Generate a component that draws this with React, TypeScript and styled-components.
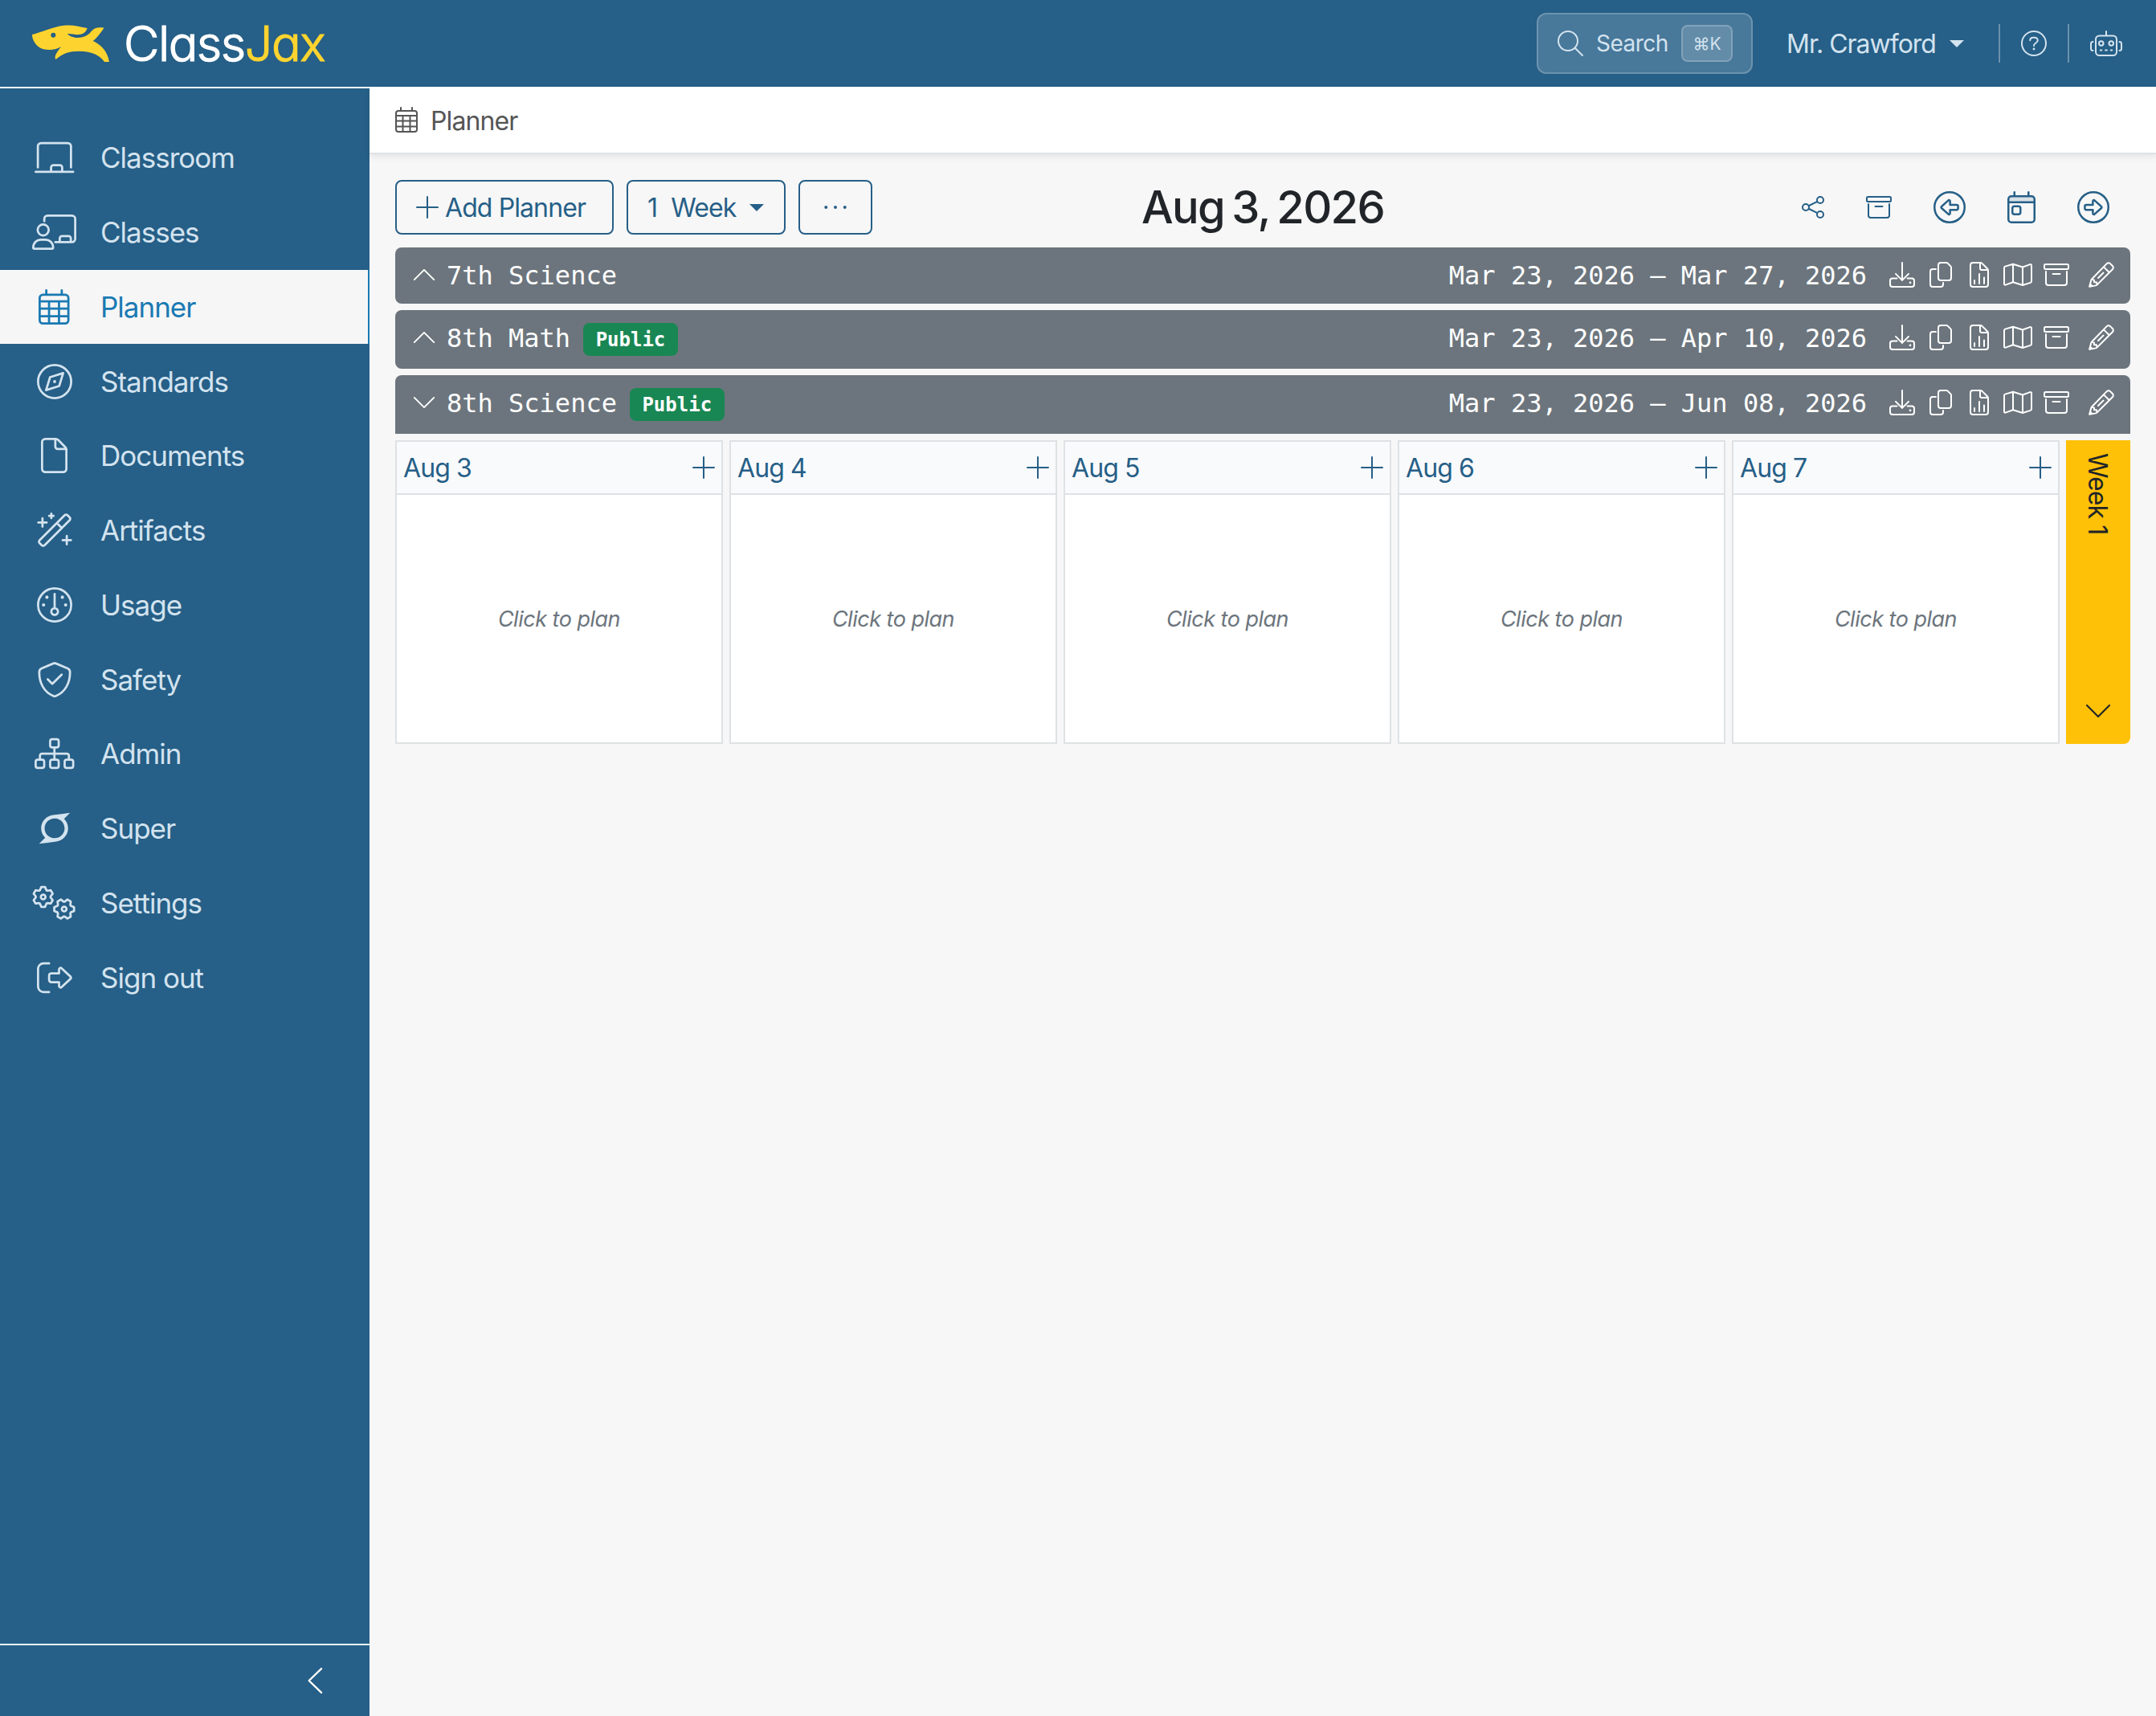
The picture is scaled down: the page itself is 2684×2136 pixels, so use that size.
import React, {FC} from "react";
import styled, {createGlobalStyle, ThemeProvider} from "styled-components";
import {FaSuperpowers} from "react-icons/fa";

const theme = {
    colors: {
        primary: '#265f87',
        active: '#1a7ab3',
        light: '#d3e3ef',
        dark: '#212529',
        grey: '#6c757d',
        border: '#dee2e4',
        page: '#f7f7f7',
        success: '#198754',
        warning: '#ffc107',
    },
    fonts: {
        sans: 'Inter, "Liberation Sans", sans-serif',
        mono: '"DejaVu Sans Mono", "Liberation Mono", monospace',
    },
};

const GlobalStyle = createGlobalStyle`
  * {
    box-sizing: border-box;
  }

  body {
    margin: 0;
    background: #f7f7f7;
    font-family: Inter, "Liberation Sans", sans-serif;
    font-weight: 430;
  }
`;

/* ---------- icons ---------- */

const gear = (cx: number, cy: number, turn: number) => {
    const points: string[] = [];
    for (let i = 0; i < 6; i++) {
        [[-26, 108], [-11, 146], [11, 146], [26, 108]].forEach(([offset, radius]) => {
            const angle = (turn + i * 60 + offset) * Math.PI / 180;
            points.push(`${(cx + radius * Math.cos(angle)).toFixed(1)} ${(cy + radius * Math.sin(angle)).toFixed(1)}`);
        });
    }
    return `M${points.join('L')}z`;
};

const circle = (cx: number, cy: number, r: number) =>
    `M${cx - r} ${cy}a${r} ${r} 0 1 0 ${r * 2} 0a${r} ${r} 0 1 0 ${-r * 2} 0z`;

const filePath = 'M16 64a48 48 0 0 1 48-48h150a48 48 0 0 1 34 14l106 106a48 48 0 0 1 14 34v278a48 48 0 0 1-48 48H64a48 48 0 0 1-48-48zM208 16v112a32 32 0 0 0 32 32h125';
const arrowPath = 'M144 216h104v-56c0-16 18-24 30-12l106 96a16 16 0 0 1 0 24L278 364c-12 12-30 4-30-12v-56H144a24 24 0 0 1-24-24v-32a24 24 0 0 1 24-24z';
const arrowLeftPath = 'M368 216H264v-56c0-16-18-24-30-12l-106 96a16 16 0 0 0 0 24l106 96c12 12 30 4 30-12v-56h104a24 24 0 0 0 24-24v-32a24 24 0 0 0-24-24z';

interface IconShape {
    width: number;
    line: string;
    fill?: string;
    tint?: string;
}

const shapes: Record<string, IconShape> = {
    chalkboard: {
        width: 576,
        line: 'M48 400V96a48 48 0 0 1 48-48h384a48 48 0 0 1 48 48v304M16 464h544M240 464v-64a32 32 0 0 1 32-32h96a32 32 0 0 1 32 32v64',
    },
    teacher: {
        width: 640,
        line: `M176 96V64a48 48 0 0 1 48-48h352a48 48 0 0 1 48 48v288a48 48 0 0 1-48 48H336M400 400v-56a32 32 0 0 1 32-32h96a32 32 0 0 1 32 32v56${circle(160, 224, 80)}M16 480c0-71 50-116 116-116h56c66 0 116 45 116 116a16 16 0 0 1-16 16H32a16 16 0 0 1-16-16z`,
    },
    calendar: {
        width: 448,
        line: 'M64 80h320a48 48 0 0 1 48 48v320a48 48 0 0 1-48 48H64a48 48 0 0 1-48-48V128a48 48 0 0 1 48-48zM112 16v64M336 16v64M16 176h416M16 280h416M16 392h416M152 176v320M296 176v320',
    },
    compass: {
        width: 512,
        line: `${circle(256, 256, 240)}M380 132L190 192L132 380L322 320z`,
        fill: circle(256, 256, 22),
    },
    file: {width: 384, line: filePath},
    wand: {
        width: 512,
        line: 'M38 402L402 38a28 28 0 0 1 40 0l32 32a28 28 0 0 1 0 40L110 474a28 28 0 0 1-40 0l-32-32a28 28 0 0 1 0-40zM288 152l72 72M80 84v120M20 144h120M208 16v64M176 48h64M432 340v120M372 400h120',
    },
    gauge: {
        width: 512,
        line: `${circle(256, 256, 240)}${circle(256, 352, 48)}M256 96v208`,
        fill: `${circle(144, 144, 24)}${circle(368, 144, 24)}${circle(96, 256, 24)}${circle(416, 256, 24)}`,
    },
    shield: {
        width: 512,
        line: 'M236 22a48 48 0 0 1 40 0L444 92c22 9 35 32 35 56 0 160-72 290-203 344a48 48 0 0 1-40 0C105 438 33 308 33 148c0-24 13-47 35-56zM156 250l66 66 136-132',
    },
    sitemap: {
        width: 576,
        line: 'M256 48h64a30 30 0 0 1 30 30v60a30 30 0 0 1-30 30h-64a30 30 0 0 1-30-30V78a30 30 0 0 1 30-30zM46 344h64a30 30 0 0 1 30 30v60a30 30 0 0 1-30 30H46a30 30 0 0 1-30-30v-60a30 30 0 0 1 30-30zM256 344h64a30 30 0 0 1 30 30v60a30 30 0 0 1-30 30h-64a30 30 0 0 1-30-30v-60a30 30 0 0 1 30-30zM466 344h64a30 30 0 0 1 30 30v60a30 30 0 0 1-30 30h-64a30 30 0 0 1-30-30v-60a30 30 0 0 1 30-30zM288 168v176M78 344v-56a32 32 0 0 1 32-32h356a32 32 0 0 1 32 32v56',
    },
    gears: {
        width: 640,
        line: `${gear(160, 168, 90)}${circle(160, 168, 34)}${gear(464, 344, 0)}${circle(464, 344, 34)}`,
    },
    signOut: {
        width: 512,
        line: 'M176 48H96a80 80 0 0 0-80 80v256a80 80 0 0 0 80 80h80M208 192h112v-56c0-20 22-30 36-16l130 120a24 24 0 0 1 0 32L356 392c-14 14-36 4-36-16v-56H208a32 32 0 0 1-32-32v-64a32 32 0 0 1 32-32z',
    },
    search: {width: 512, line: `${circle(208, 208, 192)}M344 344L496 496`},
    question: {
        width: 512,
        line: `${circle(256, 256, 240)}M180 196c0-34 26-58 60-58h32c34 0 60 26 60 58 0 54-76 56-76 100v6`,
        fill: circle(256, 368, 23),
    },
    robot: {
        width: 640,
        line: `M320 16v88M184 104h272a72 72 0 0 1 72 72v248a72 72 0 0 1-72 72H184a72 72 0 0 1-72-72V176a72 72 0 0 1 72-72z${circle(220, 256, 44)}${circle(420, 256, 44)}M204 392h24M306 392h28M412 392h24M56 224a40 40 0 0 0-40 40v96a40 40 0 0 0 40 40M584 224a40 40 0 0 1 40 40v96a40 40 0 0 1-40 40`,
    },
    share: {
        width: 448,
        line: `${circle(80, 256, 64)}${circle(368, 112, 64)}${circle(368, 400, 64)}M138 228l172-87M138 284l172 87`,
    },
    archive: {
        width: 512,
        line: 'M40 48h432a24 24 0 0 1 24 24v48a24 24 0 0 1-24 24H40a24 24 0 0 1-24-24V72a24 24 0 0 1 24-24zM48 192v224a48 48 0 0 0 48 48h320a48 48 0 0 0 48-48V192M184 240h144',
    },
    circleLeft: {width: 512, line: `${circle(256, 256, 240)}${arrowLeftPath}`},
    circleRight: {width: 512, line: `${circle(256, 256, 240)}${arrowPath}`},
    calendarDay: {
        width: 448,
        line: 'M64 80h320a48 48 0 0 1 48 48v320a48 48 0 0 1-48 48H64a48 48 0 0 1-48-48V128a48 48 0 0 1 48-48zM112 16v64M336 16v64M16 176h416M112 240h64a32 32 0 0 1 32 32v64a32 32 0 0 1-32 32h-64a32 32 0 0 1-32-32v-64a32 32 0 0 1 32-32z',
        tint: 'M64 80h320a48 48 0 0 1 48 48v48H16v-48a48 48 0 0 1 48-48z',
    },
    download: {
        width: 512,
        line: 'M256 16v350M128 238l128 128 128-128M152 328H64a48 48 0 0 0-48 48v72a48 48 0 0 0 48 48h384a48 48 0 0 0 48-48v-72a48 48 0 0 0-48-48h-88',
        fill: circle(416, 412, 22),
    },
    copy: {
        width: 448,
        line: 'M224 16h116a32 32 0 0 1 22 10l60 60a32 32 0 0 1 10 22v212a48 48 0 0 1-48 48H224a48 48 0 0 1-48-48V64a48 48 0 0 1 48-48zM128 144H64a48 48 0 0 0-48 48v256a48 48 0 0 0 48 48h160a48 48 0 0 0 48-48v-32',
    },
    fileChart: {width: 384, line: `${filePath}M96 368v64M192 240v192M288 312v120`},
    map: {
        width: 576,
        line: 'M16 120a32 32 0 0 1 20-30L192 44l192 60 148-54c14-5 28 5 28 20v314a32 32 0 0 1-20 30L384 464l-192-60L44 458c-14 5-28-5-28-20zM192 44v360M384 104v360',
    },
    pencil: {
        width: 512,
        line: 'M364 34a48 48 0 0 1 68 0l46 46a48 48 0 0 1 0 68L172 454a64 64 0 0 1-28 16L18 494l34-126a64 64 0 0 1 16-28zM300 98l114 114M192 320l104-104M66 350l46 12v42h46l10 44M34 440l38 38',
    },
    chevronUp: {width: 512, line: 'M32 368L256 144L480 368'},
    chevronDown: {width: 512, line: 'M32 144L256 368L480 144'},
    chevronLeft: {width: 320, line: 'M272 32L40 256L272 480'},
    plus: {width: 448, line: 'M224 48v416M16 256h416'},
    ellipsis: {
        width: 448,
        line: '',
        fill: `${circle(36, 256, 32)}${circle(224, 256, 32)}${circle(412, 256, 32)}`,
    },
};

const Svg = styled.svg`
  display: block;
  flex: none;
  overflow: visible;
  fill: none;
  stroke: currentColor;
  stroke-linecap: round;
  stroke-linejoin: round;
`;

interface IconProps {
    name: string;
    size?: number;
    weight?: number;
}

const Icon: FC<IconProps> = ({name, size = 32, weight = 32}) => {
    const {width, line, fill, tint} = shapes[name];

    return (
        <Svg
            width={width * size / 512}
            height={size}
            viewBox={`0 0 ${width} 512`}
            strokeWidth={weight}
        >
            {tint && <path d={tint} fill="currentColor" fillOpacity={0.14} stroke="none"/>}
            <path d={line}/>
            {fill && <path d={fill} fill="currentColor" stroke="none"/>}
        </Svg>
    );
};

/* ---------- header ---------- */

const Page = styled.div`
  display: flex;
  flex-direction: column;
  width: 2684px;
  height: 2136px;
  overflow: hidden;
  background: ${(props) => props.theme.colors.page};
`;

const Header = styled.header`
  display: flex;
  align-items: center;
  flex: none;
  height: 108px;
  padding: 0 42px 0 40px;
  color: ${(props) => props.theme.colors.light};
  background: ${(props) => props.theme.colors.primary};
`;

const Brand = styled.div`
  display: flex;
  align-items: center;
  flex: 1;
`;

const BrandName = styled.div`
  margin-left: 18px;
  color: #fff;
  font-size: 61px;
  line-height: 72px;
  font-weight: 350;
  letter-spacing: -1.5px;
  font-feature-settings: "cv11";
  -webkit-text-stroke: 1.2px currentColor;
  stroke-linejoin: round;
`;

const BrandAccent = styled.span`
  color: #fdd42f;
`;

const SearchButton = styled.div`
  display: flex;
  align-items: center;
  width: 269px;
  height: 76px;
  padding-left: 24px;
  border: 2px solid rgba(255, 255, 255, 0.2);
  border-radius: 12px;
  background: rgba(255, 255, 255, 0.16);
`;

const SearchLabel = styled.span`
  width: 106px;
  margin-left: 16px;
  font-size: 28px;
  letter-spacing: -0.5px;
`;

const Shortcut = styled.kbd`
  display: flex;
  align-items: center;
  justify-content: center;
  width: 64px;
  height: 46px;
  border: 2px solid rgba(255, 255, 255, 0.2);
  border-radius: 8px;
  background: rgba(255, 255, 255, 0.15);
  font-family: ${(props) => props.theme.fonts.sans};
  font-size: 21px;
`;

const UserMenu = styled.div`
  display: flex;
  align-items: center;
  width: 306px;
  padding-left: 42px;
  font-size: 32px;
  letter-spacing: -1px;
`;

const Caret = styled.span`
  margin-left: 17px;
  border: 9px solid transparent;
  border-top-color: currentColor;
  border-bottom: 0;
`;

const HeaderAction = styled.div`
  display: flex;
  align-items: center;
  height: 48px;
  padding: 0 26px;
  border-left: 2px solid rgba(255, 255, 255, 0.32);

  &:last-child {
    padding-right: 0;
  }
`;

/* ---------- sidebar ---------- */

const Body = styled.div`
  display: flex;
  flex: 1;
  min-height: 0;
`;

const Sidebar = styled.nav`
  display: flex;
  flex-direction: column;
  flex: none;
  width: 460px;
  padding-top: 40px;
  border-top: 2px solid #fff;
  background: ${(props) => props.theme.colors.primary};
`;

const NavItem = styled.div<{$active?: boolean}>`
  display: flex;
  align-items: center;
  height: 92.75px;
  padding-left: 40px;
  border-right: 2px solid ${(props) => props.$active ? props.theme.colors.active : 'transparent'};
  color: ${(props) => props.$active ? props.theme.colors.active : props.theme.colors.light};
  background: ${(props) => props.$active ? '#f6f6f6' : 'transparent'};
  background-clip: padding-box;
  font-size: 35px;
  letter-spacing: -1px;
`;

const NavIcon = styled.span`
  display: flex;
  justify-content: center;
  width: 55px;
  margin-right: 30px;
`;

const SidebarFooter = styled.div`
  display: flex;
  align-items: center;
  justify-content: flex-end;
  height: 90px;
  margin-top: auto;
  padding-right: 57px;
  border-top: 2px solid #fff;
  color: #fff;
`;

/* ---------- content ---------- */

const Main = styled.main`
  display: flex;
  flex-direction: column;
  flex: 1;
  min-width: 0;
`;

const Breadcrumb = styled.div`
  display: flex;
  align-items: center;
  flex: none;
  height: 84px;
  padding-left: 32px;
  border-bottom: 2px solid ${(props) => props.theme.colors.border};
  box-shadow: 0 4px 8px rgba(0, 0, 0, 0.07);
  color: #555;
  background: #fff;
  font-size: 32px;
  letter-spacing: -0.9px;
`;

const BreadcrumbText = styled.span`
  margin-left: 16px;
  padding-top: 2px;
`;

const Content = styled.div`
  display: flex;
  flex-direction: column;
  padding: 32px 32px 0;
`;

const Toolbar = styled.div`
  display: grid;
  grid-template-columns: 1fr auto 1fr;
  align-items: center;
  height: 68px;
  margin-bottom: 16px;
  color: ${(props) => props.theme.colors.primary};
`;

const ToolbarButtons = styled.div`
  display: flex;
  gap: 16px;
`;

const Button = styled.div<{$width: number}>`
  display: flex;
  align-items: center;
  width: ${(props) => props.$width}px;
  height: 68px;
  padding-left: 24px;
  border: 2px solid ${(props) => props.theme.colors.primary};
  border-radius: 8px;
  font-size: 32px;
  letter-spacing: -0.9px;
  white-space: nowrap;
`;

const MoreButton = styled(Button)`
  justify-content: center;
  padding-left: 0;
`;

const ButtonText = styled.span`
  margin-left: 8px;
`;

const WeekCount = styled.span`
  margin-right: 17px;
`;

const Title = styled.h1`
  margin: 0;
  color: ${(props) => props.theme.colors.dark};
  font-size: 56px;
  line-height: 68px;
  font-weight: 540;
  letter-spacing: -1.7px;
  word-spacing: -4px;
`;

const ToolbarIcons = styled.div`
  display: flex;
  align-items: center;
  justify-content: flex-end;
  gap: 52px;
  padding-right: 26px;
`;

const PlannerBar = styled.div<{$tall?: boolean; $open?: boolean}>`
  display: flex;
  align-items: flex-start;
  height: ${(props) => props.$tall ? 73 : 70}px;
  margin-bottom: 8px;
  padding: 10px 16px 0 22px;
  border-radius: ${(props) => props.$open ? '8px 8px 0 0' : '8px'};
  color: #fff;
  background: ${(props) => props.theme.colors.grey};
  font-family: ${(props) => props.theme.fonts.mono};
  font-size: 32px;
  line-height: 50px;
`;

const BarIcon = styled.span`
  display: flex;
  align-items: center;
  height: 47px;
`;

const BarName = styled.span`
  margin-left: 14px;
`;

const Badge = styled.span`
  height: 41px;
  margin: 6px 0 0 16px;
  padding: 0 15.5px;
  border-radius: 8px;
  background: ${(props) => props.theme.colors.success};
  font-size: 24px;
  line-height: 42px;
  font-weight: 700;
`;

const BarDates = styled.span`
  margin: 0 24px 0 auto;
`;

const BarIcons = styled.span`
  display: grid;
  grid-template-columns: repeat(5, 40px) 48px;
  column-gap: 8px;
  align-items: center;
  justify-items: center;
  height: 48px;

  & > :last-child {
    justify-self: end;
    margin-right: 4px;
  }
`;

const Week = styled.div`
  display: grid;
  grid-template-columns: repeat(5, 408px) 80px;
  column-gap: 8px;
  height: 378px;
`;

const Day = styled.div`
  display: flex;
  flex-direction: column;
  border: 2px solid ${(props) => props.theme.colors.border};
  background: #fff;
`;

const DayHeader = styled.div`
  display: flex;
  align-items: center;
  justify-content: space-between;
  height: 66px;
  padding: 0 8px;
  border-bottom: 2px solid ${(props) => props.theme.colors.border};
  color: ${(props) => props.theme.colors.primary};
  background: #f9fafc;
  font-size: 32px;
  letter-spacing: -0.9px;
`;

const DayBody = styled.div`
  display: flex;
  align-items: center;
  justify-content: center;
  flex: 1;
  color: ${(props) => props.theme.colors.grey};
  font-size: 27px;
  font-style: italic;
  letter-spacing: -0.5px;
`;

const WeekTab = styled.div`
  display: flex;
  flex-direction: column;
  align-items: center;
  justify-content: space-between;
  padding: 16px 0 25px;
  border-bottom-right-radius: 8px;
  color: ${(props) => props.theme.colors.dark};
  background: ${(props) => props.theme.colors.warning};
`;

const WeekLabel = styled.span`
  margin-right: 2px;
  writing-mode: vertical-rl;
  font-size: 32px;
  line-height: 48px;
  letter-spacing: -0.9px;
`;

const navItems = [
    {icon: 'chalkboard', label: 'Classroom'},
    {icon: 'teacher', label: 'Classes'},
    {icon: 'calendar', label: 'Planner', active: true},
    {icon: 'compass', label: 'Standards'},
    {icon: 'file', label: 'Documents'},
    {icon: 'wand', label: 'Artifacts'},
    {icon: 'gauge', label: 'Usage'},
    {icon: 'shield', label: 'Safety'},
    {icon: 'sitemap', label: 'Admin'},
    {icon: 'super', label: 'Super'},
    {icon: 'gears', label: 'Settings'},
    {icon: 'signOut', label: 'Sign out'},
];

const planners = [
    {name: '7th Science', dates: 'Mar 23, 2026 – Mar 27, 2026', isPublic: false, open: false},
    {name: '8th Math', dates: 'Mar 23, 2026 – Apr 10, 2026', isPublic: true, open: false},
    {name: '8th Science', dates: 'Mar 23, 2026 – Jun 08, 2026', isPublic: true, open: true},
];

const days = ['Aug 3', 'Aug 4', 'Aug 5', 'Aug 6', 'Aug 7'];

const barIcons = ['download', 'copy', 'fileChart', 'map', 'archive', 'pencil'];

const Logo: FC = () => (
    <svg width="96" height="46.5" viewBox="120 93 288 139">
        <path
            fill="#fdd42f"
            d="M120 129C150 122 196 100 238 95C270 91 298 99 326 105C322 118 312 129 295 129C280 130 266 125 252 126C258 134 272 141 290 141C315 141 332 129 341 117C352 104 364 101 388 103C378 122 360 142 347 153C376 166 401 190 408 231L390 231C375 208 345 191 295 191C258 191 235 199 208 222C202 211 209 200 228 174C210 186 185 189 160 183C135 175 120 150 120 129Z"
        />
        <circle cx="199" cy="131" r="9" fill="#265f87"/>
    </svg>
);

const App: FC = () => {
    return (
        <ThemeProvider theme={theme}>
            <GlobalStyle/>
            <Page>
                <Header>
                    <Brand>
                        <Logo/>
                        <BrandName>Class<BrandAccent>Jax</BrandAccent></BrandName>
                    </Brand>
                    <SearchButton>
                        <Icon name="search"/>
                        <SearchLabel>Search</SearchLabel>
                        <Shortcut>⌘K</Shortcut>
                    </SearchButton>
                    <UserMenu>
                        Mr. Crawford
                        <Caret/>
                    </UserMenu>
                    <HeaderAction><Icon name="question"/></HeaderAction>
                    <HeaderAction><Icon name="robot"/></HeaderAction>
                </Header>
                <Body>
                    <Sidebar>
                        {navItems.map(({icon, label, active}) => (
                            <NavItem key={label} $active={active}>
                                <NavIcon>
                                    {icon === 'super' ? <FaSuperpowers size={44}/> : <Icon name={icon} size={44}/>}
                                </NavIcon>
                                {label}
                            </NavItem>
                        ))}
                        <SidebarFooter>
                            <Icon name="chevronLeft" size={34} weight={36}/>
                        </SidebarFooter>
                    </Sidebar>
                    <Main>
                        <Breadcrumb>
                            <Icon name="calendar"/>
                            <BreadcrumbText>Planner</BreadcrumbText>
                        </Breadcrumb>
                        <Content>
                            <Toolbar>
                                <ToolbarButtons>
                                    <Button $width={272}>
                                        <Icon name="plus"/>
                                        <ButtonText>Add Planner</ButtonText>
                                    </Button>
                                    <Button $width={198}>
                                        <WeekCount>1</WeekCount>
                                        Week
                                        <Caret/>
                                    </Button>
                                    <MoreButton $width={92}>
                                        <Icon name="ellipsis"/>
                                    </MoreButton>
                                </ToolbarButtons>
                                <Title>Aug 3, 2026</Title>
                                <ToolbarIcons>
                                    <Icon name="share"/>
                                    <Icon name="archive"/>
                                    <Icon name="circleLeft" size={40}/>
                                    <Icon name="calendarDay" size={40}/>
                                    <Icon name="circleRight" size={40}/>
                                </ToolbarIcons>
                            </Toolbar>
                            {planners.map(({name, dates, isPublic, open}) => (
                                <PlannerBar key={name} $tall={isPublic} $open={open}>
                                    <BarIcon>
                                        <Icon name={open ? 'chevronDown' : 'chevronUp'} size={28} weight={34}/>
                                    </BarIcon>
                                    <BarName>{name}</BarName>
                                    {isPublic && <Badge>Public</Badge>}
                                    <BarDates>{dates}</BarDates>
                                    <BarIcons>
                                        {barIcons.map((icon) => <Icon key={icon} name={icon}/>)}
                                    </BarIcons>
                                </PlannerBar>
                            ))}
                            <Week>
                                {days.map((day) => (
                                    <Day key={day}>
                                        <DayHeader>
                                            {day}
                                            <Icon name="plus"/>
                                        </DayHeader>
                                        <DayBody>Click to plan</DayBody>
                                    </Day>
                                ))}
                                <WeekTab>
                                    <WeekLabel>Week 1</WeekLabel>
                                    <Icon name="chevronDown" weight={34}/>
                                </WeekTab>
                            </Week>
                        </Content>
                    </Main>
                </Body>
            </Page>
        </ThemeProvider>
    );
};

export default App;
